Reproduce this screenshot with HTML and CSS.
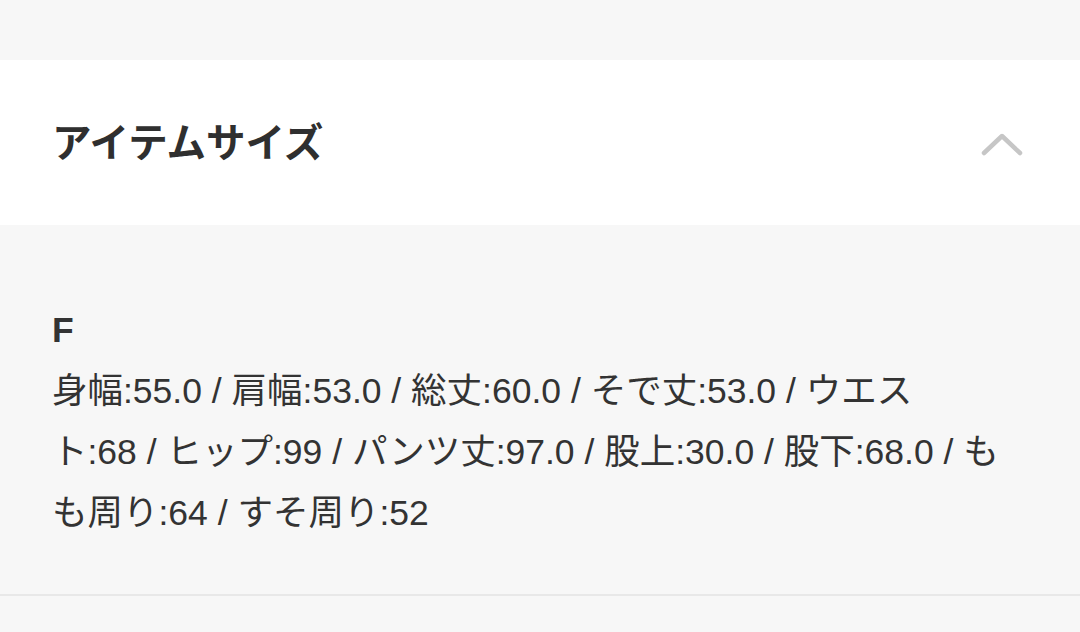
FILE: index.html
```html
<!DOCTYPE html>
<html lang="ja">
<head>
<meta charset="utf-8">
<link rel="stylesheet" href="styles.css">
</head>
<body>
<div class="page">
  <div class="top-band"></div>
  <section class="accordion">
    <div class="acc-header">
      <h2 class="acc-title">アイテムサイズ</h2>
      <svg class="chevron" width="44" height="26" viewBox="0 0 44 26">
        <polyline points="4,22 22,5 40,22" fill="none" stroke="#c6c6c6" stroke-width="4.5" stroke-linecap="round" stroke-linejoin="round"/>
      </svg>
    </div>
    <div class="acc-body">
      <p class="size-label">F</p>
      <p class="size-text">身幅:55.0 / 肩幅:53.0 / 総丈:60.0 / そで丈:53.0 / ウエス<br>ト:68 / ヒップ:99 / パンツ丈:97.0 / 股上:30.0 / 股下:68.0 / も<br>も周り:64 / すそ周り:52</p>
    </div>
  </section>
</div>
</body>
</html>
```
FILE: styles.css
```css
html, body {
  margin: 0;
  padding: 0;
  background: #f7f7f7;
}
body {
  width: 1080px;
  height: 632px;
  overflow: hidden;
  font-family: "Liberation Sans", "Noto Sans CJK JP", sans-serif;
  color: #333333;
}
.top-band {
  height: 60px;
  background: #f7f7f7;
}
.acc-header {
  height: 165px;
  box-sizing: border-box;
  background: #ffffff;
  display: flex;
  align-items: center;
  justify-content: space-between;
  padding: 0 56px 6px 52px;
}
.acc-title {
  margin: 0;
  font-size: 39.5px;
  font-weight: 700;
  color: #2f2f2f;
  letter-spacing: 0;
}
.chevron {
  display: block;
  margin-top: 8px;
}
.acc-body {
  background: #f7f7f7;
  padding: 75px 52px 50px;
  border-bottom: 2px solid #e8e8e8;
}
.size-label {
  margin: 0;
  font-size: 35.5px;
  font-weight: 700;
  line-height: 61px;
}
.size-text {
  margin: 0;
  font-size: 35.5px;
  line-height: 61px;
  white-space: nowrap;
}
```
